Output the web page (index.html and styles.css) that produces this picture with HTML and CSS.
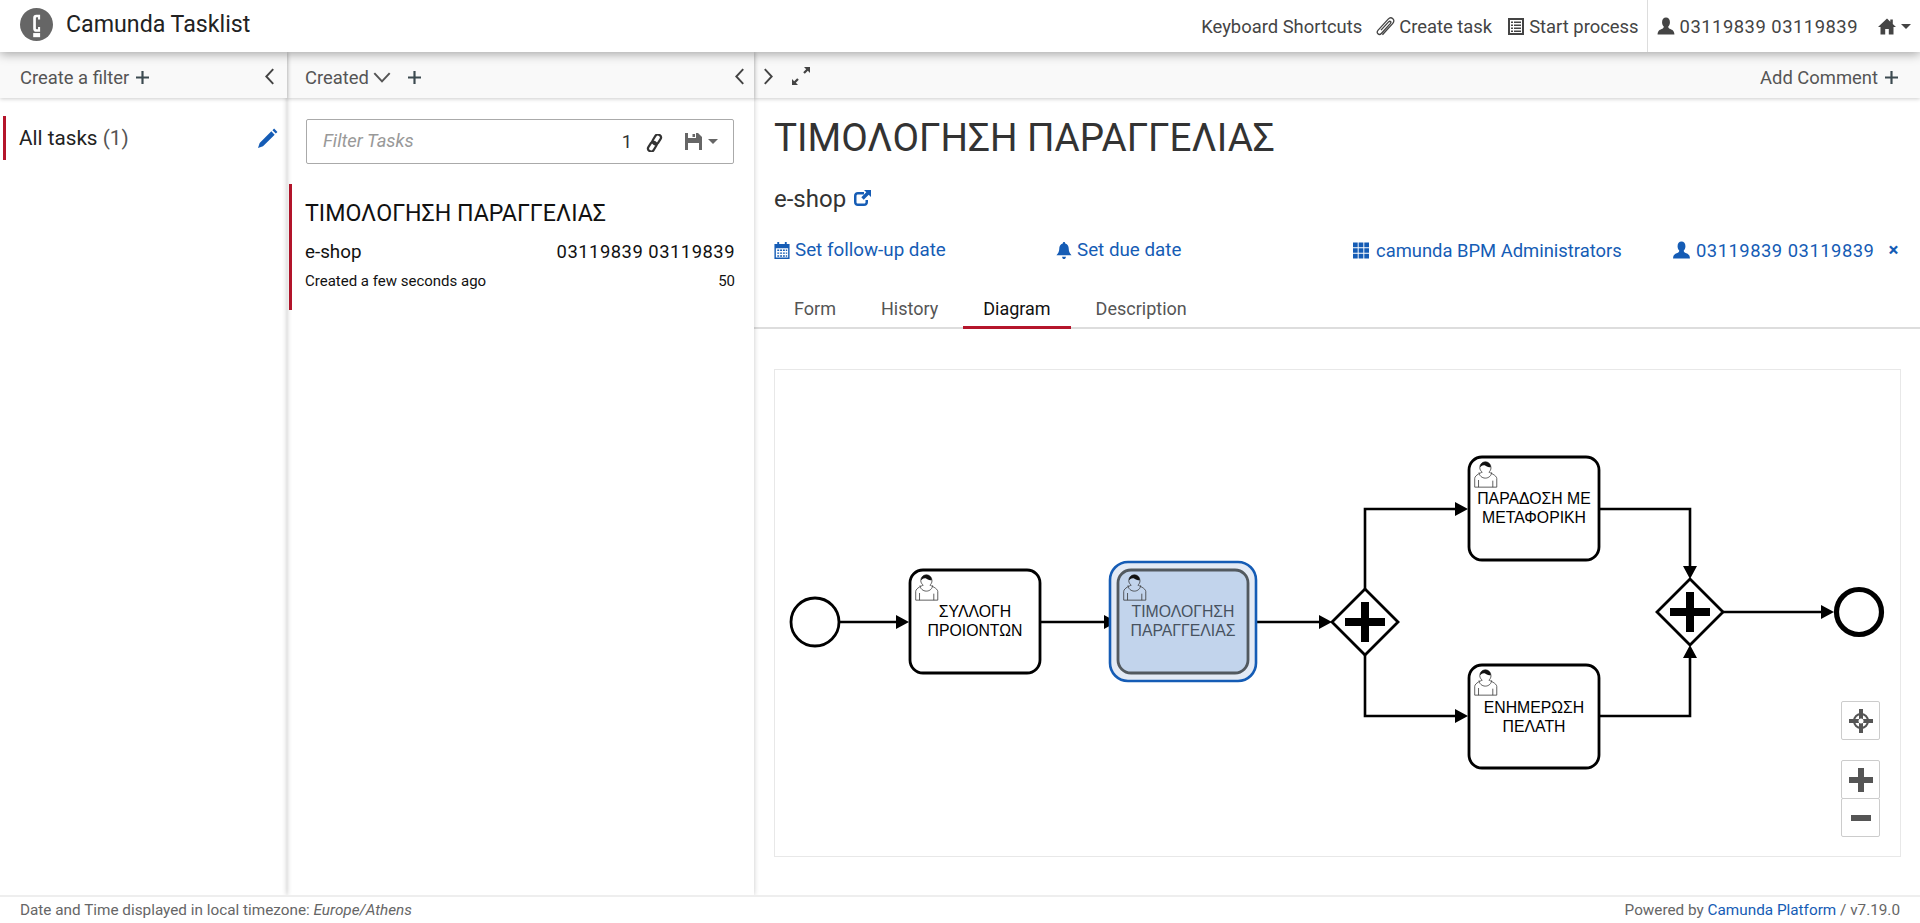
FILE: index.html
```html
<!DOCTYPE html>
<html lang="en">
<head>
  <meta charset="UTF-8">
  <meta name="viewport" content="width=device-width, initial-scale=1.0">
  <title>Camunda Tasklist</title>
  <link rel="stylesheet" href="styles.css">
</head>
<body>
  <svg class="icon-defs" width="0" height="0">
    <symbol id="i-user" viewBox="0 0 16 16"><path d="M8 .5C5.900.5 4.500 2.200 4.500 4.600c0 1.600.6 3 1.500 3.900 0 1-.3 1.500-1.200 1.900C3 11.100.6 11.700.5 15.500h15c-.1-3.800-2.500-4.400-4.300-5.100-.9-.4-1.200-.9-1.200-1.900.9-.9 1.500-2.300 1.500-3.900C11.500 2.200 10.100.5 8 .5z"/></symbol>
    <symbol id="i-plus" viewBox="0 0 12 12"><path d="M5 0h2v5h5v2H7v5H5V7H0V5h5z"/></symbol>
    <symbol id="i-left" viewBox="0 0 10 16"><path d="M8.500 1 2 8l6.500 7" fill="none" stroke="currentColor" stroke-width="1.800"/></symbol>
    <symbol id="i-right" viewBox="0 0 10 16"><path d="M1.500 1 8 8l-6.500 7" fill="none" stroke="currentColor" stroke-width="1.800"/></symbol>
    <symbol id="i-bpmn-user" viewBox="0 2.500 18.500 20.500" overflow="visible">
      <g transform="translate(11.500 11)" stroke="#333" stroke-width=".6" fill="#fff">
        <path d="m0 0c.909-.845 1.594-2.049 1.594-3.385 0-2.554-1.805-4.622-4.357-4.622-2.552 0-4.288 2.068-4.288 4.622 0 1.348.974 2.562 1.896 3.405-.529.187-5.669 2.097-5.794 4.756v6.718h17v-6.718c0-2.298-5.528-4.595-6.051-4.776zm-8 6 0 5.500m11 0 0-5" fill="none"/>
        <path d="m2.162 1.009c0 2.447-2.158 4.431-4.821 4.431-2.665 0-4.822-1.981-4.822-4.431" transform="translate(-.1 -.900)" fill="none"/>
        <path d="m-6.900-3.800c0 0 2.251-2.358 4.274-1.177 2.024 1.181 4.221 1.537 4.124.965-.098-.57-.117-3.791-4.191-4.136-3.575.001-4.208 3.367-4.207 4.348z" fill="#111" stroke="none"/>
      </g>
    </symbol>
  </svg>

  <header class="topbar">
    <div class="brand">
      <svg class="brand-logo" viewBox="0 0 32 32"><circle cx="16" cy="16" r="16" fill="#666"/><path d="M19.500 6.500h-3.700c-2 0-3 1-3 3v10.500c0 2 1 3 3 3h3.700v-4.500h-2v2.200h-1.300c-.5 0-.8-.3-.8-.8V9.800c0-.5.3-.8.8-.8h1.300v2.200h2z" fill="#fff"/><rect x="12.800" y="24.300" width="6.700" height="4" fill="#fff"/></svg>
      <span class="brand-name">Camunda Tasklist</span>
    </div>
    <nav class="topnav">
      <span class="topnav-item">Keyboard Shortcuts</span>
      <span class="topnav-item">
        <svg class="ico ico-clip" viewBox="1.500 1 15 15.500"><path d="M6.500 15.500 14.800 6.400c1.300-1.400 1.300-3 .2-4s-2.600-1-3.800.3L3 11.700c-1 1.100-1 2.300-.2 3s1.900.7 2.800-.3l7.300-8c.6-.7.6-1.300.2-1.700s-1-.3-1.600.3L5.300 11.700" fill="none" stroke="currentColor" stroke-width="1.100"/></svg>
        Create task
      </span>
      <span class="topnav-item">
        <svg class="ico ico-list" viewBox="0 0 16 17"><path fill-rule="evenodd" d="M0 0h16v17H0zM2 2v13h12V2zM3 3.500h2v1.500H3zm3 0h7v1.500H6zm-3 3h2V8H3zm3 0h7V8H6zm-3 3h2V11H3zm3 0h7V11H6zm-3 3h2V14H3zm3 0h7V14H6z"/></svg>
        Start process
      </span>
      <span class="topnav-item topnav-user">
        <svg class="ico ico-user"><use href="#i-user"/></svg>
        <span class="num">03119839 03119839</span>
      </span>
      <span class="topnav-item topnav-home">
        <svg class="ico ico-home" viewBox="0 0 18 17"><path d="M9 .5 0 9h2.500v7.500h4.700V11h3.600v5.500h4.700V9H18l-3.200-3V1.500h-2.500v2.200z"/></svg>
        <i class="caret"></i>
      </span>
    </nav>
  </header>

  <main class="columns">
    <section class="col col-filters">
      <div class="toolbar">
        <span class="toolbar-link">Create a filter <svg class="ico-plus"><use href="#i-plus"/></svg></span>
        <svg class="chev"><use href="#i-left"/></svg>
      </div>
      <div class="filter-row">
        <span class="filter-name">All tasks <em>(1)</em></span>
        <svg class="ico-pencil" viewBox="1 1 18 18"><path d="M15.500 1.500 18.500 4.500 17 6 14 3zM13 4 16 7 5.500 17.500 1 19 2.500 14.500z"/></svg>
      </div>
    </section>

    <section class="col col-list">
      <div class="toolbar">
        <span class="toolbar-link">Created
          <svg class="ico-down" viewBox="0 0 16 10"><path d="M1 1l7 7.500L15 1" fill="none" stroke="currentColor" stroke-width="1.800"/></svg>
          <svg class="ico-plus ico-plus-gap"><use href="#i-plus"/></svg>
        </span>
        <svg class="chev"><use href="#i-left"/></svg>
      </div>
      <div class="search-box">
        <span class="search-hint">Filter Tasks</span>
        <span class="search-count">1</span>
        <svg class="ico-link" viewBox="0 0 17 18"><g transform="rotate(32 8.500 9)" fill="none" stroke="#333" stroke-width="2.200"><rect x="5.500" y="-.5" width="6" height="10.500" rx="3"/><rect x="5.500" y="8" width="6" height="10.500" rx="3"/></g></svg>
        <svg class="ico-save" viewBox="0 0 17 17"><path fill-rule="evenodd" d="M0 0h13l4 4v13H0zM3 0v5h8V0zM7.500 1h2.500v3H7.500zM3 10v7h11v-7z"/></svg>
        <i class="caret caret-save"></i>
      </div>
      <article class="task-card">
        <h3 class="task-title">ΤΙΜΟΛΟΓΗΣΗ ΠΑΡΑΓΓΕΛΙΑΣ</h3>
        <div class="task-meta"><span>e-shop</span><span class="num">03119839 03119839</span></div>
        <div class="task-sub"><span>Created a few seconds ago</span><span>50</span></div>
      </article>
    </section>

    <section class="col col-detail">
      <div class="toolbar toolbar-detail">
        <svg class="chev"><use href="#i-right"/></svg>
        <svg class="ico-expand" viewBox="0 0 20 20"><path d="M13 1h6v6l-2.200-2.200-3 3-1.600-1.600 3-3zM7 19H1v-6l2.200 2.200 3-3 1.600 1.600-3 3z"/></svg>
        <span class="toolbar-link toolbar-right">Add Comment <svg class="ico-plus"><use href="#i-plus"/></svg></span>
      </div>
      <div class="detail-head">
        <h1 class="detail-title">ΤΙΜΟΛΟΓΗΣΗ ΠΑΡΑΓΓΕΛΙΑΣ</h1>
        <div class="detail-process">e-shop
          <svg class="ico-ext" viewBox="0 0 18 18"><path d="M11 2H5C2.500 2 1 3.500 1 6v6c0 2.500 1.500 4 4 4h6c2.500 0 4-1.500 4-4v-2h-2.500v2c0 1-.5 1.500-1.500 1.500H5c-1 0-1.500-.5-1.500-1.500V6c0-1 .5-1.500 1.500-1.500h6z"/><path d="M11 0h7v7l-2.300-2.300-5 5-2.400-2.400 5-5z"/></svg>
        </div>
        <div class="detail-actions">
          <span class="action action-follow">
            <svg class="ico" viewBox="0 0 16 18"><path fill-rule="evenodd" d="M3 0h2v2h6V0h2v2h3v16H0V2h3zM1.500 6.500v10h13v-10zM3 8h2v1.500H3zm3 0h2v1.500H6zm3 0h2v1.500H9zm3 0h1.500v1.500H12zM3 11h2v1.500H3zm3 0h2v1.500H6zm3 0h2v1.500H9zm3 0h1.500v1.500H12zM3 14h2v1.500H3zm3 0h2v1.500H6zm3 0h2v1.500H9zm3 0h1.500v1.500H12z"/></svg>
            Set follow-up date
          </span>
          <span class="action action-due">
            <svg class="ico" viewBox="0 0 16 18"><path d="M8 0c1 0 1.300.7 1.300 1.500C12 2.200 13 4.500 13 7c0 3 1 5 3 7H0c2-2 3-4 3-7 0-2.500 1-4.800 3.700-5.500C6.700.7 7 0 8 0zM6 15.500h4c0 1.500-1 2.500-2 2.500s-2-1-2-2.500z"/></svg>
            Set due date
          </span>
          <span class="action action-group">
            <svg class="ico ico-group" viewBox="0 0 17 17"><path d="M0 0h5v5H0zm6 0h5v5H6zm6 0h5v5h-5zM0 6h5v5H0zm6 0h5v5H6zm6 0h5v5h-5zM0 12h5v5H0zm6 0h5v5H6zm6 0h5v5h-5z"/></svg>
            <span class="group-name">camunda BPM Administrators</span>
          </span>
          <span class="action action-user">
            <svg class="ico ico-user-lg"><use href="#i-user"/></svg>
            <span class="num">03119839 03119839</span>
            <span class="action-close">×</span>
          </span>
        </div>
      </div>
      <ul class="tabs">
        <li class="tab">Form</li>
        <li class="tab">History</li>
        <li class="tab tab-active">Diagram</li>
        <li class="tab">Description</li>
      </ul>
      <div class="diagram">
        <svg class="bpmn" viewBox="775 370 1125 486">
          <!-- flows -->
          <g class="flows">
            <path d="M839 622H898M1041 622H1106M1249 622H1322"/>
            <path d="M1365 589V509H1457M1365 655V716H1457"/>
            <path d="M1599 509H1690V568M1599 716H1690V656"/>
            <path d="M1723 612H1823"/>
          </g>
          <g class="heads">
            <path d="M909 622l-13-7v14zM1117 622l-13-7v14zM1332 622l-13-7v14z"/>
            <path d="M1468 509l-13-7v14zM1468 716l-13-7v14z"/>
            <path d="M1690 579l-7-13h14zM1690 645l-7 13h14z"/>
            <path d="M1834 612l-13-7v14z"/>
          </g>
          <circle class="shape" cx="815" cy="622" r="24"/>
          <circle class="shape shape-end" cx="1859" cy="612" r="22.500"/>

          <rect class="shape" x="910" y="570" width="130" height="103" rx="13"/>
          <rect class="hl-outer" x="1110" y="562" width="146" height="119" rx="18"/>
          <rect class="shape shape-active" x="1118" y="570" width="130" height="103" rx="13"/>
          <rect class="shape" x="1469" y="457" width="130" height="103" rx="13"/>
          <rect class="shape" x="1469" y="665" width="130" height="103" rx="13"/>

          <path class="shape" d="M1365 589l33 33-33 33-33-33z"/>
          <path class="shape" d="M1690 579l33 33-33 33-33-33z"/>
          <path class="cross" d="M1365 602v40M1345 622h40"/>
          <path class="cross" d="M1690 592v40M1670 612h40"/>

          <use href="#i-bpmn-user" x="915" y="574" width="24" height="27"/>
          <use href="#i-bpmn-user" x="1123" y="574" width="24" height="27"/>
          <use href="#i-bpmn-user" x="1474" y="461" width="24" height="27"/>
          <use href="#i-bpmn-user" x="1474" y="669" width="24" height="27"/>

          <text class="label"><tspan x="975" y="617">ΣΥΛΛΟΓΗ</tspan><tspan x="975" y="636">ΠΡΟΙΟΝΤΩΝ</tspan></text>
          <text class="label label-active"><tspan x="1183" y="617">ΤΙΜΟΛΟΓΗΣΗ</tspan><tspan x="1183" y="636">ΠΑΡΑΓΓΕΛΙΑΣ</tspan></text>
          <text class="label"><tspan x="1534" y="504">ΠΑΡΑΔΟΣΗ ΜΕ</tspan><tspan x="1534" y="523">ΜΕΤΑΦΟΡΙΚΗ</tspan></text>
          <text class="label"><tspan x="1534" y="713">ΕΝΗΜΕΡΩΣΗ</tspan><tspan x="1534" y="732">ΠΕΛΑΤΗ</tspan></text>
        </svg>
        <div class="zoom-tools">
          <button class="zoom-btn">
            <svg viewBox="0 0 26 26" width="26" height="26"><circle cx="13" cy="13" r="7" fill="none" stroke="#555" stroke-width="2"/><path d="M13 1v24M1 13h24" stroke="#555" stroke-width="4"/><circle cx="13" cy="13" r="2.500" fill="#fff"/></svg>
          </button>
          <div class="zoom-group">
            <button class="zoom-btn">
              <svg viewBox="0 0 26 26" width="26" height="26"><path d="M13 1v24M1 13h24" stroke="#555" stroke-width="6"/></svg>
            </button>
            <button class="zoom-btn">
              <svg viewBox="0 0 26 26" width="26" height="26"><path d="M3 13h20" stroke="#555" stroke-width="6"/></svg>
            </button>
          </div>
        </div>
      </div>
    </section>
  </main>

  <footer class="footer">
    <span>Date and Time displayed in local timezone: <em>Europe/Athens</em></span>
    <span>Powered by <a class="footer-link" href="#">Camunda Platform</a> / v7.19.0</span>
  </footer>
</body>
</html>
```

FILE: styles.css
```css
* {
  box-sizing: border-box;
}

body {
  margin: 0;
  height: 923px;
  display: flex;
  flex-direction: column;
  overflow: hidden;
  background-color: #fff;
  color: #333;
  font-family: Roboto, "Noto Sans", sans-serif;
  font-size: 18.4px;
}

.icon-defs {
  position: absolute;
}

.num {
  letter-spacing: 0.5px;
}

/* top bar */
.topbar {
  height: 52px;
  flex: none;
  display: flex;
  align-items: stretch;
  justify-content: space-between;
  background-color: #fff;
  box-shadow: 0 2px 10px rgba(0, 0, 0, 0.35);
  position: relative;
  z-index: 3;
}

.brand {
  display: flex;
  align-items: center;
  padding: 0 0 4px 20px;
}

.brand-logo {
  width: 33px;
  height: 33px;
}

.brand-name {
  margin-left: 13px;
  font-size: 23.2px;
  color: #222;
}

.topnav {
  display: flex;
  align-items: stretch;
  color: #444;
}

.topnav-item {
  display: flex;
  align-items: center;
  margin-left: 16px;
}

.topnav-user {
  margin-left: 8px;
  padding-left: 9px;
  border-left: 1px solid #ddd;
}

.topnav-home {
  margin-left: 20px;
  padding-right: 9px;
}

.ico {
  width: 16px;
  height: 17px;
  margin-right: 5px;
  fill: currentColor;
}

.ico-clip {
  width: 19px;
  height: 19px;
  margin-left: -2px;
  margin-right: 4px;
}

.ico-user {
  width: 18px;
  height: 18px;
}

.ico-home {
  width: 18px;
  height: 17px;
  margin-right: 5px;
}

.caret {
  width: 0;
  height: 0;
  border-top: 5px solid #444;
  border-left: 5px solid transparent;
  border-right: 5px solid transparent;
}

/* columns */
.columns {
  flex: 1;
  display: flex;
  min-height: 0;
}

.col {
  display: flex;
  flex-direction: column;
  position: relative;
}

.col-filters {
  width: 287px;
  box-shadow: 0 0 5px rgba(0, 0, 0, 0.22);
  z-index: 2;
}

.col-list {
  width: 467px;
  box-shadow: 0 0 5px rgba(0, 0, 0, 0.22);
  z-index: 1;
}

.col-detail {
  flex: 1;
  min-width: 0;
}

.toolbar {
  height: 46px;
  flex: none;
  display: flex;
  align-items: center;
  padding: 5px 12px 0 20px;
  background-color: #f9f9f9;
  box-shadow: 0 1px 4px rgba(0, 0, 0, 0.2);
  color: #555;
}

.col-list .toolbar {
  padding: 5px 9px 0 18px;
}

.toolbar-link {
  display: flex;
  align-items: center;
}

.chev {
  width: 11px;
  height: 17px;
  margin-left: auto;
  margin-top: -2px;
  color: #444;
}

.ico-plus {
  width: 13px;
  height: 13px;
  margin-left: 7px;
  fill: #3c4a50;
}

.ico-plus-gap {
  margin-left: 17px;
}

.ico-down {
  width: 18px;
  height: 11px;
  margin-left: 4px;
}

.toolbar-detail {
  padding: 5px 22px 0 9px;
}

.toolbar-detail .chev {
  margin-left: 0;
}

.ico-expand {
  width: 20px;
  height: 20px;
  margin-left: 17px;
  margin-top: -4px;
  fill: #444;
}

.toolbar-right {
  margin-left: auto;
}

.filter-row {
  margin: 18px 0 0 3px;
  height: 44px;
  display: flex;
  align-items: center;
  justify-content: space-between;
  padding: 0 9px 0 13px;
  border-left: 3px solid #b5152b;
  font-size: 20.7px;
  color: #222;
}

.filter-name em {
  font-style: normal;
  color: #555;
}

.ico-pencil {
  width: 20px;
  height: 20px;
  fill: #155cb5;
}

/* task list */
.search-box {
  margin: 21px 20px 0 19px;
  height: 45px;
  flex: none;
  display: flex;
  align-items: center;
  padding: 0 15px 0 16px;
  border: 1px solid #aaa;
  border-radius: 2px;
}

.search-hint {
  flex: 1;
  margin-top: -3px;
  font-style: italic;
  color: #999;
}

.search-count {
  color: #333;
}

.ico-link {
  width: 17px;
  height: 18px;
  margin-left: 14px;
  margin-top: 3px;
}

.ico-save {
  width: 17px;
  height: 17px;
  margin-left: 22px;
  fill: #666;
}

.caret-save {
  margin-left: 6px;
  border-top-color: #666;
}

.task-card {
  margin: 20px 0 0 2px;
  height: 126px;
  padding: 14px 19px 0 13px;
  border-left: 3px solid #b5152b;
  color: #111;
}

.task-title {
  margin: 0;
  font-size: 23.2px;
  font-weight: 400;
  line-height: 30px;
}

.task-meta {
  display: flex;
  justify-content: space-between;
  margin-top: 11px;
  line-height: 26px;
  font-size: 18.8px;
}

.task-meta .num {
  font-size: 18.4px;
}

.task-sub {
  display: flex;
  justify-content: space-between;
  margin-top: 5px;
  font-size: 15px;
  line-height: 22px;
}

/* task detail */
.detail-head {
  height: 195px;
  flex: none;
  padding: 0 20px;
}

.detail-title {
  margin: 0;
  padding-top: 18px;
  font-size: 38.6px;
  font-weight: 400;
  line-height: 44px;
  color: #333;
}

.detail-process {
  display: flex;
  align-items: center;
  margin-top: 24px;
  font-size: 24px;
  line-height: 30px;
}

.ico-ext {
  width: 18px;
  height: 18px;
  margin-left: 7px;
  fill: #155cb5;
}

.detail-actions {
  position: relative;
  display: flex;
  margin-top: 24px;
  height: 24px;
  color: #155cb5;
  font-size: 18.8px;
}

.action {
  display: flex;
  align-items: center;
}

.action-follow {
  width: 282px;
}

.action-due {
  width: 297px;
}

.action-group {
  width: 319px;
}

.ico-group {
  margin-right: 7px;
}

.group-name {
  font-size: 18.4px;
}

.action-close {
  margin-left: 14px;
  font-weight: 700;
}

.action-user .num {
  font-size: 18.4px;
}

.ico-user-lg {
  width: 19px;
  height: 18px;
}

.tabs {
  list-style: none;
  display: flex;
  align-items: flex-start;
  gap: 5px;
  margin: -12px 0 0;
  height: 48px;
  flex: none;
  padding: 0 0 0 20px;
  border-bottom: 2px solid #ddd;
  color: #555;
  font-size: 18px;
}

.tab {
  height: 48px;
  padding: 16px 20px 0;
  line-height: 24px;
}

.tab-active {
  color: #111;
  border-bottom: 3px solid #b5152b;
}

/* bpmn diagram */
.diagram {
  position: relative;
  flex: none;
  height: 488px;
  margin: 40px 19px 0 20px;
  border: 1px solid #e8e8e8;
}

.bpmn {
  display: block;
  width: 1125px;
  height: 486px;
}

.flows {
  fill: none;
  stroke: #000;
  stroke-width: 2.6;
}

.heads {
  fill: #000;
}

.shape {
  fill: #fff;
  stroke: #000;
  stroke-width: 2.8;
}

.shape-end {
  stroke-width: 5.2;
}

.hl-outer {
  fill: #e3eaf5;
  stroke: #155cb5;
  stroke-width: 2.6;
}

.shape-active {
  fill: #c2d4ec;
  stroke: #52595f;
}

.cross {
  fill: none;
  stroke: #000;
  stroke-width: 8;
}

.label {
  font-family: "Liberation Sans", Arial, sans-serif;
  font-size: 15.8px;
  text-anchor: middle;
  fill: #000;
}

.label-active {
  fill: #47525f;
}

.zoom-tools {
  position: absolute;
  right: 20px;
  bottom: 19px;
  display: flex;
  flex-direction: column;
  gap: 20px;
}

.zoom-group {
  display: flex;
  flex-direction: column;
}

.zoom-btn {
  display: flex;
  align-items: center;
  justify-content: center;
  width: 39px;
  height: 39px;
  padding: 0;
  background-color: #fff;
  border: 1px solid #ccc;
  border-radius: 2px;
}

.zoom-group .zoom-btn + .zoom-btn {
  margin-top: -1px;
}

/* footer */
.footer {
  height: 28px;
  flex: none;
  display: flex;
  align-items: center;
  justify-content: space-between;
  padding: 0 20px;
  border-top: 2px solid #eee;
  background-color: #fff;
  position: relative;
  z-index: 3;
  font-size: 15.3px;
  color: #666;
}

.footer-link {
  color: #155cb5;
  text-decoration: none;
}
```
